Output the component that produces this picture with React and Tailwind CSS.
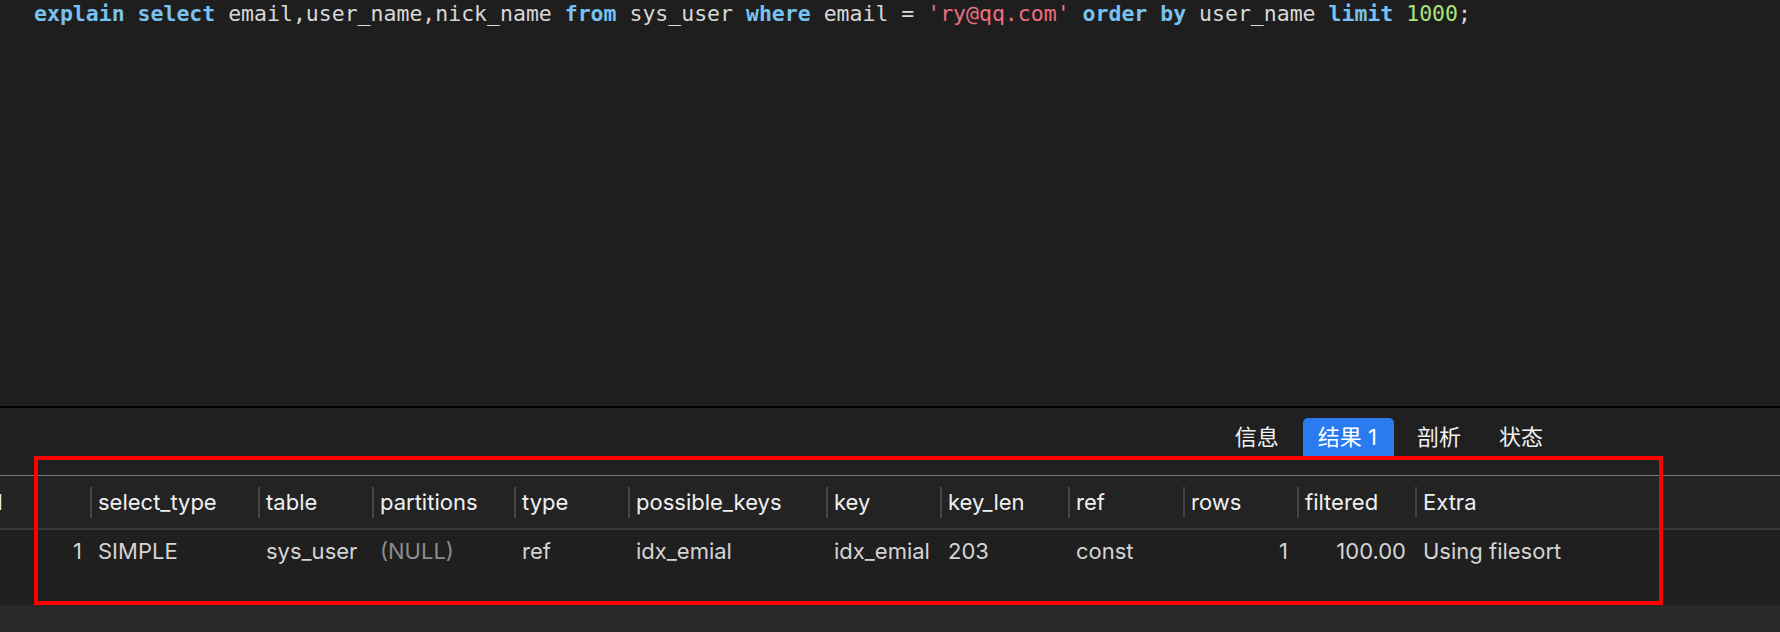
import React from "react";

const cols = [
  { h: "select_type", d: "SIMPLE", w: "w-[168px]" },
  { h: "table", d: "sys_user", w: "w-[114px]" },
  { h: "partitions", d: "(NULL)", w: "w-[142px]", muted: true },
  { h: "type", d: "ref", w: "w-[114px]" },
  { h: "possible_keys", d: "idx_emial", w: "w-[198px]" },
  { h: "key", d: "idx_emial", w: "w-[114px]" },
  { h: "key_len", d: "203", w: "w-[128px]" },
  { h: "ref", d: "const", w: "w-[115px]" },
  { h: "rows", d: "1", w: "w-[114px]", right: true },
  { h: "filtered", d: "100.00", w: "w-[118px]", right: true },
  { h: "Extra", d: "Using filesort", w: "w-[400px]" },
];

const K = ({ children }) => (
  <span className="text-[#78c2ef] font-bold">{children}</span>
);

export default function App() {
  return (
    <div className="relative w-[1780px] h-[632px] overflow-hidden bg-[#1e1e1e] flex flex-col">
      {/* editor */}
      <div
        className="h-[406px] pl-[34px] pt-[1px] text-[21.5px] leading-[26px] text-[#d8d8d8] whitespace-pre"
        style={{ fontFamily: '"DejaVu Sans Mono", monospace' }}
      >
        <K>explain</K> <K>select</K> email,user_name,nick_name <K>from</K> sys_user{" "}
        <K>where</K> email = <span className="text-[#ee6e80]">'ry@qq.com'</span>{" "}
        <K>order</K> <K>by</K> user_name <K>limit</K>{" "}
        <span className="text-[#a9e37b]">1000</span>;
      </div>
      <div className="h-[2px] bg-black" />

      {/* tabs */}
      <div
        className="h-[67px] bg-[#202020] flex justify-end items-start pt-[10px] pr-[221px] text-[22px] text-[#f2f2f2]"
        style={{ fontFamily: 'Inter, "Noto Sans CJK SC", sans-serif' }}
      >
        <div className="h-[39px] px-[16px] flex items-center">信息</div>
        <div className="h-[39px] ml-[8px] pl-[15px] pr-[17px] flex items-center bg-[#2a7bf0] rounded-t-[5px] text-white">
          结果 1
        </div>
        <div className="h-[39px] ml-[7px] px-[16px] flex items-center">剖析</div>
        <div className="h-[39px] ml-[6px] px-[16px] flex items-center">状态</div>
      </div>
      <div className="h-px bg-[#787878]" />

      {/* table */}
      <div
        className="overflow-hidden text-[22px] leading-[28px]"
        style={{ fontFamily: 'Inter, "Noto Sans", sans-serif' }}
      >
        <div className="h-[52px] bg-[#232323] flex items-center ml-[-24px] text-[#f0f0f0] whitespace-nowrap">
          <div className="w-[114px] shrink-0 pl-[8px]">id</div>
          {cols.map((c) => (
            <div key={c.h} className={`${c.w} shrink-0 flex items-center`}>
              <div className="w-[2px] h-[31px] bg-[#444444] shrink-0" />
              <div className="pl-[6px]">{c.h}</div>
            </div>
          ))}
        </div>
        <div className="h-[2px] bg-[#393939]" />
        <div className="h-[75px] bg-[#1f1f1f] flex items-start pt-[7px] ml-[-24px] text-[#d4d4d4] whitespace-nowrap">
          <div className="w-[114px] shrink-0 pr-[8px] text-right">1</div>
          {cols.map((c) => (
            <div
              key={c.h}
              className={`${c.w} shrink-0 ${
                c.right ? "text-right pr-[9px]" : "pl-[8px]"
              } ${c.muted ? "text-[#8c8c8c]" : ""}`}
            >
              {c.d}
            </div>
          ))}
        </div>
      </div>
      <div className="flex-1 bg-[#282828]" />

      {/* annotation */}
      <div className="absolute left-[34px] top-[456px] w-[1629px] h-[149px] border-4 border-[#ff0000]" />
    </div>
  );
}
